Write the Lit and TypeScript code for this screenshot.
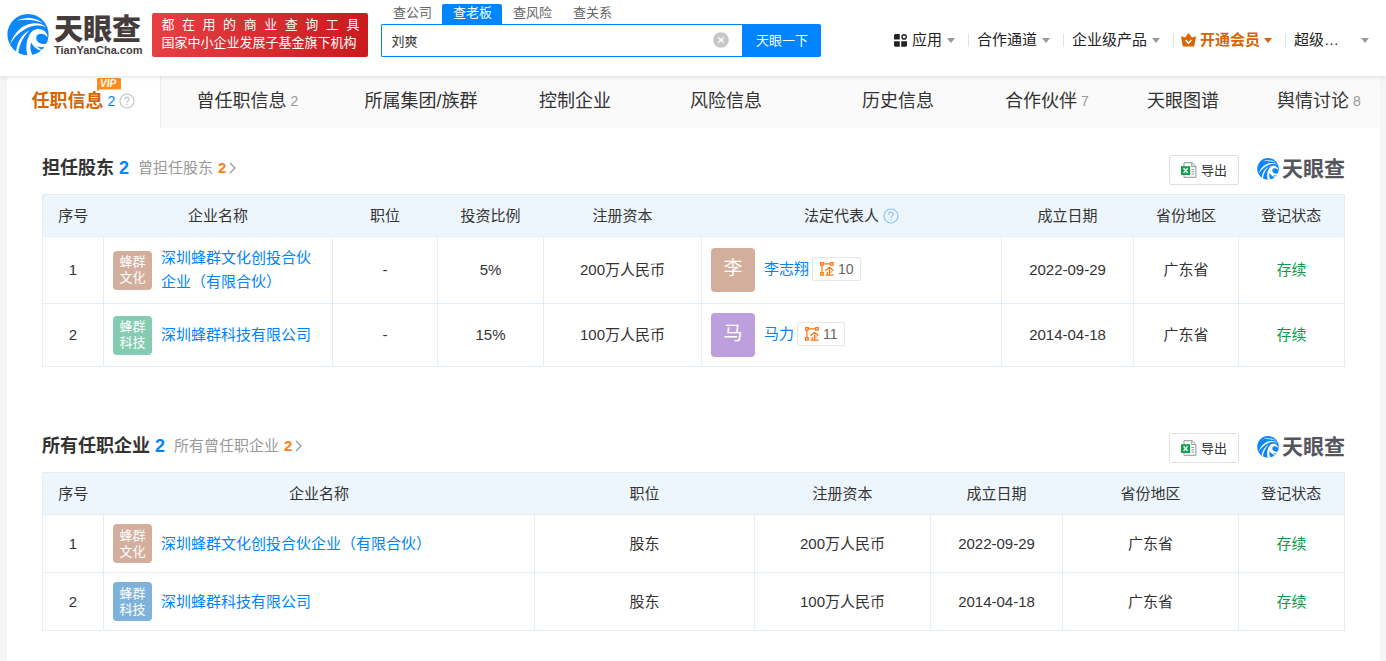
import { LitElement, html, css, svg, nothing } from "lit";
import { customElement, property, state } from "lit/decorators.js";
import { classMap } from "lit/directives/class-map.js";

const swirl = svg`
  <circle cx="21" cy="20.6" r="20.6" fill="#0b86fb"/>
  <path d="M10 6.600C18 2.800 28 3 36 9.200C28 5.600 18 5 10 6.600Z" fill="#fff"/>
  <path d="M3 30.500C7 18.500 15 11 25 9.600C31 8.800 36 10 39 13.200C33 10.600 27 11 22 13.200C13.500 17 7.500 22.500 3 30.500Z" fill="#fff"/>
  <path d="M9 38.200C10 28 14.500 20.500 22.500 16.200C16.500 22.500 12.500 29.500 11.200 39.200Z" fill="#fff"/>
  <path d="M24 18.500C27 14.500 34 13.600 38 17.500C39.500 19 40.500 21 40.600 23.200C38.500 20.200 34.500 18.800 31.500 20.200C28.400 21.800 28.600 26 31.400 28.200C33.600 30 37 30.600 40.300 29.200L38.500 32.600C36 33.600 33 33.400 30.200 32.200C32 34.400 33.500 35.400 36 35.800L34.800 36.800C29.500 35.600 26 32.500 24.200 28.400C22.800 32 23 36.500 25.500 41.200L20.500 41.600C18.200 33 19.500 24.500 24 18.500Z" fill="#fff"/>
`;

const help = html`<svg class="help" viewBox="0 0 16 16" aria-hidden="true">
  <circle cx="8" cy="8" r="7" fill="none" stroke="currentColor" stroke-width="1.2"/>
  <path d="M5.800 6.400C5.800 3.400 10.300 3.500 10.300 6.200C10.300 7.800 8 7.900 8 9.700M8 11v1.300" fill="none" stroke="currentColor" stroke-width="1.200"/>
</svg>`;

const caret = html`<svg class="caret" viewBox="0 0 8 5" aria-hidden="true"><path d="M0 0H8L4 5Z" fill="currentColor"/></svg>`;

@customElement("brand-mark")
export class BrandMark extends LitElement {
  @property({ type: Boolean, reflect: true }) large = false;
  static styles = css`
    :host { display: flex; align-items: center; gap: 3px; color: #54565c; white-space: nowrap; }
    :host([large]) { gap: 5px; color: #453d3c; }
    svg { width: 22px; height: 22px; flex: none; }
    :host([large]) svg { width: 42px; height: 42px; }
    .words { display: flex; flex-direction: column; }
    .name { font-size: 21px; line-height: 24px; font-weight: 700; }
    :host([large]) .name { font-size: 29px; line-height: 30px; font-weight: 900; }
    .site { font-size: 11px; line-height: 11px; font-weight: 700; }
  `;
  render() {
    return html`<svg viewBox="0 0 42 42" aria-hidden="true">${swirl}</svg>
      <span class="words"><span class="name">天眼查</span>${this.large ? html`<span class="site">TianYanCha.com</span>` : nothing}</span>`;
  }
}

@customElement("site-header")
export class SiteHeader extends LitElement {
  @state() private scope = 1;
  @state() private query = "刘爽";
  private scopes = ["查公司", "查老板", "查风险", "查关系"];

  static styles = css`
    :host { display: flex; align-items: flex-start; height: 76px; padding: 0 17px 0 7px; box-sizing: border-box; background: #fff; box-shadow: 0 1px 5px rgba(0, 0, 0, 0.12); position: relative; z-index: 1; }
    brand-mark { margin: 14px 10px 0 0; }
    .banner { width: 198px; margin: 13px 13px 0 0; padding: 3px 9px 5px; border-radius: 2px; color: #fff; font-size: 13px; line-height: 18px; background: linear-gradient(100deg, #e64045, #c91a1d); white-space: nowrap; }
    .spread { text-align: justify; text-align-last: justify; }
    .search { width: 440px; padding-top: 4px; }
    .scopes { display: flex; padding-left: 1px; }
    .scopes button { min-width: 60px; height: 20px; padding: 0 0 2px; border: 0; border-radius: 2px 2px 0 0; background: none; color: #666; font: inherit; font-size: 13px; line-height: 18px; }
    .scopes .on { background: #0084ff; color: #fff; }
    form { display: flex; height: 33px; }
    .field { flex: 1; display: flex; align-items: center; padding: 0 13px 0 9px; border: 1px solid #0084ff; border-right: 0; border-radius: 2px 0 0 2px; }
    input { flex: 1; min-width: 0; padding: 0; border: 0; outline: 0; background: none; color: #333; font: inherit; font-size: 13px; }
    .clear { display: flex; padding: 0 0 2px; border: 0; background: none; }
    .clear svg { width: 16px; height: 16px; }
    .go { width: 79px; padding: 0 0 2px; border: 0; border-radius: 0 2px 2px 0; background: #0084ff; color: #fff; font: inherit; font-size: 13px; }
    nav { display: flex; align-items: center; margin: 29px 0 0 auto; font-size: 15px; line-height: 22px; }
    nav a { display: flex; align-items: center; gap: 5px; padding: 0 13px 0 0; color: #222; text-decoration: none; white-space: nowrap; }
    nav a + a { padding-left: 9px; background: linear-gradient(#dde3ea, #dde3ea) left center / 1px 13px no-repeat; }
    nav a:last-child { padding-right: 0; gap: 22px; }
    .caret { width: 8px; height: 5px; color: #999; }
    .apps { width: 13px; height: 13px; }
    .crown { width: 15px; height: 14px; }
    nav .vip { color: #d96400; font-weight: 700; padding-left: 8px; gap: 4px; }
    .vip .caret { color: #d96400; }
  `;

  render() {
    return html`
      <brand-mark large></brand-mark>
      <div class="banner"><div class="spread">都 在 用 的 商 业 查 询 工 具</div><div>国家中小企业发展子基金旗下机构</div></div>
      <div class="search">
        <div class="scopes">${this.scopes.map((s, i) => html`<button type="button" class=${classMap({ on: i === this.scope })} @click=${() => (this.scope = i)}>${s}</button>`)}</div>
        <form @submit=${(e: Event) => e.preventDefault()}>
          <div class="field">
            <input aria-label="查老板" .value=${this.query} @input=${(e: Event) => (this.query = (e.target as HTMLInputElement).value)}>
            <button class="clear" type="button" aria-label="清空" @click=${() => (this.query = "")}>
              <svg viewBox="0 0 16 16"><circle cx="8" cy="8" r="7.800" fill="#c6c6c6"/><path d="M5.300 5.300L10.700 10.700M10.700 5.300L5.300 10.700" stroke="#fff" stroke-width="1.300"/></svg>
            </button>
          </div>
          <button class="go">天眼一下</button>
        </form>
      </div>
      <nav>
        <a href="#"><svg class="apps" viewBox="0 0 14 14" aria-hidden="true"><path d="M1.200 0H6.200V6H0V1.200ZM0 7.800H6.200V13.800H1.200L0 12.600ZM7.800 7.800H14V12.600L12.800 13.800H7.800Z" fill="#222"/><circle cx="10.900" cy="3.100" r="2.300" fill="none" stroke="#222" stroke-width="1.500"/></svg>应用${caret}</a>
        <a href="#">合作通道${caret}</a>
        <a href="#">企业级产品${caret}</a>
        <a href="#" class="vip"><svg class="crown" viewBox="0 0 15 14" aria-hidden="true"><path d="M0 3.200L4 4.600L7.500 0L11 4.600L15 3.200L13.400 12.400Q13.200 13.600 12 13.600H3Q1.800 13.600 1.600 12.400Z" fill="#d96400"/><path d="M4.600 7L7.500 10.200L10.400 7" fill="none" stroke="#fff" stroke-width="1.700"/></svg>开通会员${caret}</a>
        <a href="#">超级…${caret}</a>
      </nav>`;
  }
}

@customElement("section-tabs")
export class SectionTabs extends LitElement {
  private tabs: [string, string?][] = [["任职信息", "2"], ["曾任职信息", "2"], ["所属集团/族群"], ["控制企业"], ["风险信息"], ["历史信息"], ["合作伙伴", "7"], ["天眼图谱"], ["舆情讨论", "8"]];
  static styles = css`
    :host { display: grid; grid-template-columns: 154fr 173fr 174fr 134fr 168fr 176fr 122fr 150fr 122fr; height: 52px; background: #fafafa; }
    a { display: flex; align-items: center; justify-content: center; gap: 4px; padding-bottom: 2px; color: #333; text-decoration: none; font-size: 18px; line-height: 24px; white-space: nowrap; }
    .count { color: #999; font-size: 14px; line-height: 20px; }
    .on { background: #fff; border-right: 1px solid #eee; color: #d96400; font-weight: 700; }
    .on .count { color: #0084ff; font-weight: 400; }
    .label { position: relative; }
    .badge { position: absolute; top: -11px; right: -17px; width: 24px; height: 13px; }
    .badge text { font: italic 700 10px "Liberation Sans", sans-serif; }
    .help { width: 16px; height: 16px; color: #bfc4cc; }
  `;
  render() {
    return html`${this.tabs.map(([t, n], i) => html`<a href="#" class=${classMap({ on: i === 0 })}>
      <span class="label">${t}${i === 0 ? html`<svg class="badge" viewBox="0 0 24 13"><path d="M1 0H23Q24 0 24 1V10.500Q24 11.500 23 11.500H3L0 13V1Q0 0 1 0Z" fill="#ff8d1a"/><text x="3" y="9" fill="#fff">VIP</text></svg>` : nothing}</span>
      ${n ? html`<span class="count">${n}</span>` : nothing}${i === 0 ? help : nothing}</a>`)}`;
  }
}

type Company = { name: string; mark: [string, string]; tone: string };
type Person = { name: string; tone: string; links: number };
type Cell = string | Company | Person;
type Column = { title: string; width: number; hint?: boolean };

@customElement("record-section")
export class RecordSection extends LitElement {
  @property() heading = "";
  @property() past = "";
  @property({ attribute: false }) columns: Column[] = [];
  @property({ attribute: false }) rows: Cell[][] = [];

  static styles = css`
    :host { display: block; }
    header { display: flex; align-items: center; height: 30px; margin-bottom: 9px; }
    h2 { display: flex; gap: 5px; margin: 0 9px 0 0; font-size: 18px; line-height: 26px; color: #333; }
    h2 b { color: #0084ff; }
    .titles { display: flex; align-items: center; padding-bottom: 4px; }
    .past { display: flex; align-items: center; gap: 5px; color: #999; font-size: 15px; line-height: 22px; text-decoration: none; }
    .past b { color: #ff7d18; }
    .past svg { width: 7px; height: 12px; margin-left: -2px; }
    .export { display: flex; align-items: center; justify-content: center; gap: 4px; width: 70px; height: 30px; margin: 0 18px 0 auto; padding: 0; border: 1px solid #dcdfe3; border-radius: 2px; background: #fff; color: #333; font: inherit; font-size: 13px; }
    .export span { padding-bottom: 2px; }
    .export svg { width: 16px; height: 16px; }
    brand-mark { padding-bottom: 2px; }
    table { width: 100%; table-layout: fixed; border-collapse: collapse; font-size: 15px; line-height: 24px; color: #333; }
    th, td { border: 1px solid #e2edf6; text-align: center; font-weight: 400; }
    th { height: 41px; padding: 0; background: #eef6fd; border-left: 0; border-right: 0; }
    th:first-child { border-left: 1px solid #e2edf6; }
    th:last-child { border-right: 1px solid #e2edf6; }
    td { padding: 9px; }
    td a { color: #0084ff; text-decoration: none; }
    .ok { color: #0a9c4a; }
    .hinted { display: flex; align-items: center; justify-content: center; gap: 4px; }
    .help { width: 16px; height: 16px; color: #8dc3f5; }
    .entity { display: flex; align-items: center; gap: 9px; text-align: left; }
    .mark { flex: none; display: flex; flex-direction: column; justify-content: center; align-items: center; width: 39px; height: 39px; border-radius: 4px; color: #fff; font-size: 13px; line-height: 16px; }
    .face { flex: none; width: 44px; height: 44px; border-radius: 4px; color: #fff; font-size: 19px; line-height: 42px; text-align: center; }
    .sand { background: #d3ae9d; }
    .mint { background: #84ccb1; }
    .sky { background: #7fb2da; }
    .plum { background: #bd9fdd; }
    .person { display: flex; align-items: center; gap: 3px; padding-bottom: 2px; }
    .links { display: flex; align-items: center; gap: 4px; height: 22px; padding: 0 6px 0 7px; border: 1px solid #e2e7ec; border-radius: 2px; }
    td .links { color: #666; font-size: 14px; }
    .links svg { width: 14px; height: 14px; }
  `;

  private cell(c: Cell) {
    if (typeof c === "string") return c === "存续" ? html`<span class="ok">${c}</span>` : c;
    if ("mark" in c) return html`<div class="entity"><span class="mark ${c.tone}"><span>${c.mark[0]}</span><span>${c.mark[1]}</span></span><a href="#">${c.name}</a></div>`;
    return html`<div class="entity"><span class="face ${c.tone}">${c.name[0]}</span><span class="person"><a href="#">${c.name}</a><a class="links" href="#">
      <svg viewBox="0 0 14 14" aria-hidden="true"><g fill="none" stroke="#ff7410" stroke-width="1.200"><path d="M.6 .6h2.600v2.600H.6ZM10.600 .6h2.600v2.600h-2.600ZM.6 10.600h2.600v2.600H.6ZM3.200 1.900h7.400M1.900 3.200v7.400"/><path d="M5.400 8.800L9.400 5.200L13.500 8.800M9.500 7.600V13M9.500 10h2.500M7.300 9.800V13M5.600 13.200h8"/></g></svg>${c.links}</a></span></div>`;
  }

  render() {
    return html`<header>
        <div class="titles"><h2>${this.heading}<b>${this.rows.length}</b></h2>
        <a class="past" href="#">${this.past}<b>${this.rows.length}</b><svg viewBox="0 0 7 12" aria-hidden="true"><path d="M1 1L6 6L1 11" fill="none" stroke="#999" stroke-width="1.300"/></svg></a></div>
        <button class="export"><svg viewBox="0 0 16 16" aria-hidden="true"><path d="M3 4V.7H11L14.900 4.500V15.300H3V13M10.800 .7V4.600H14.900M10.500 7.500H13M10.500 9.800H13M10.500 12.100H13" fill="none" stroke="#8f959c"/><path d="M0 4.200H9.200V13H0Z" fill="#12a04c"/><path d="M2.600 6.300L6.600 10.900M6.600 6.300L2.600 10.900" stroke="#fff" stroke-width="1.400"/></svg><span>导出</span></button>
        <brand-mark></brand-mark>
      </header>
      <table>
        <colgroup>${this.columns.map(c => html`<col style="width:${c.width}px">`)}</colgroup>
        <thead><tr>${this.columns.map(c => html`<th scope="col">${c.hint ? html`<span class="hinted">${c.title}${help}</span>` : c.title}</th>`)}</tr></thead>
        <tbody>${this.rows.map(r => html`<tr>${r.map(c => html`<td>${this.cell(c)}</td>`)}</tr>`)}</tbody>
      </table>`;
  }
}

const culture: Company = { name: "深圳蜂群文化创投合伙企业（有限合伙）", mark: ["蜂群", "文化"], tone: "sand" };
const tech: Company = { name: "深圳蜂群科技有限公司", mark: ["蜂群", "科技"], tone: "mint" };

@customElement("app-root")
export class AppRoot extends LitElement {
  private holdingColumns: Column[] = [
    { title: "序号", width: 61 }, { title: "企业名称", width: 229 }, { title: "职位", width: 105 }, { title: "投资比例", width: 106 }, { title: "注册资本", width: 158 },
    { title: "法定代表人", width: 300, hint: true }, { title: "成立日期", width: 132 }, { title: "省份地区", width: 105 }, { title: "登记状态", width: 106 },
  ];
  private holdings: Cell[][] = [
    ["1", culture, "-", "5%", "200万人民币", { name: "李志翔", tone: "sand", links: 10 }, "2022-09-29", "广东省", "存续"],
    ["2", tech, "-", "15%", "100万人民币", { name: "马力", tone: "plum", links: 11 }, "2014-04-18", "广东省", "存续"],
  ];
  private postColumns: Column[] = [
    { title: "序号", width: 61 }, { title: "企业名称", width: 431 }, { title: "职位", width: 220 }, { title: "注册资本", width: 176 },
    { title: "成立日期", width: 132 }, { title: "省份地区", width: 176 }, { title: "登记状态", width: 106 },
  ];
  private posts: Cell[][] = [
    ["1", culture, "股东", "200万人民币", "2022-09-29", "广东省", "存续"],
    ["2", { ...tech, tone: "sky" }, "股东", "100万人民币", "2014-04-18", "广东省", "存续"],
  ];

  static styles = css`
    :host { display: block; min-height: 100vh; background: #f5f5f5; font-family: "Liberation Sans", "Noto Sans CJK SC", sans-serif; }
    main { margin: 0 6px 0 7px; min-height: calc(100vh - 76px); background: #fff; }
    .sections { display: flex; flex-direction: column; gap: 66px; padding: 27px 35px 30px; }
  `;

  render() {
    return html`<site-header></site-header>
      <main>
        <section-tabs></section-tabs>
        <div class="sections">
          <record-section heading="担任股东" past="曾担任股东" .columns=${this.holdingColumns} .rows=${this.holdings}></record-section>
          <record-section heading="所有任职企业" past="所有曾任职企业" .columns=${this.postColumns} .rows=${this.posts}></record-section>
        </div>
      </main>`;
  }
}
